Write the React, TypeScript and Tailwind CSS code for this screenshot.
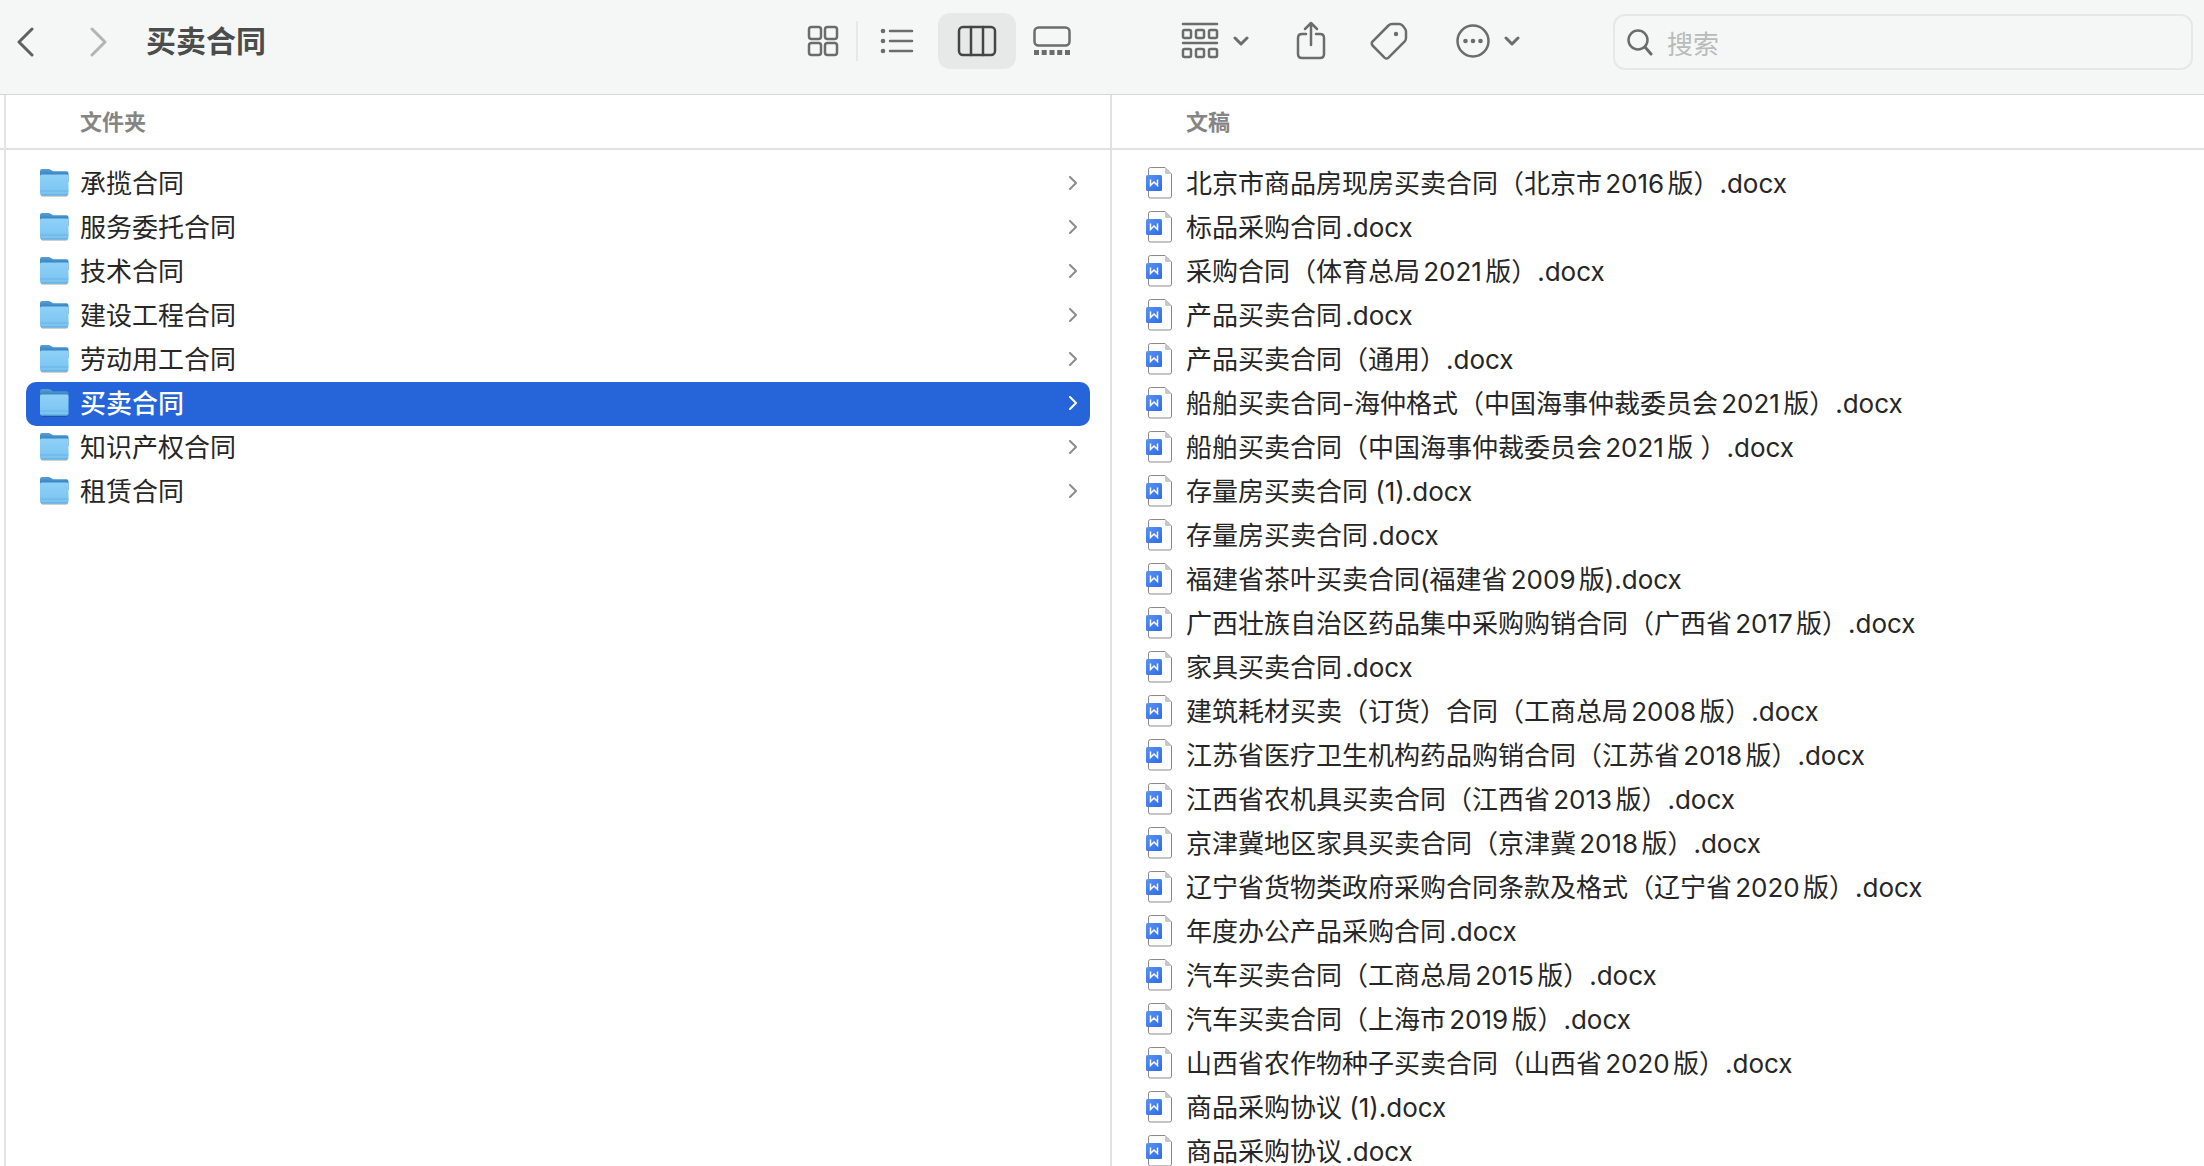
import type { ReactNode } from "react";

const folders = [
  "承揽合同",
  "服务委托合同",
  "技术合同",
  "建设工程合同",
  "劳动用工合同",
  "买卖合同",
  "知识产权合同",
  "租赁合同",
];

const documents = [
  "北京市商品房现房买卖合同（北京市2016版）.docx",
  "标品采购合同.docx",
  "采购合同（体育总局2021版）.docx",
  "产品买卖合同.docx",
  "产品买卖合同（通用）.docx",
  "船舶买卖合同-海仲格式（中国海事仲裁委员会2021版）.docx",
  "船舶买卖合同（中国海事仲裁委员会2021版 ）.docx",
  "存量房买卖合同 (1).docx",
  "存量房买卖合同.docx",
  "福建省茶叶买卖合同(福建省2009版).docx",
  "广西壮族自治区药品集中采购购销合同（广西省2017版）.docx",
  "家具买卖合同.docx",
  "建筑耗材买卖（订货）合同（工商总局2008版）.docx",
  "江苏省医疗卫生机构药品购销合同（江苏省2018版）.docx",
  "江西省农机具买卖合同（江西省2013版）.docx",
  "京津冀地区家具买卖合同（京津冀2018版）.docx",
  "辽宁省货物类政府采购合同条款及格式（辽宁省2020版）.docx",
  "年度办公产品采购合同.docx",
  "汽车买卖合同（工商总局2015版）.docx",
  "汽车买卖合同（上海市2019版）.docx",
  "山西省农作物种子买卖合同（山西省2020版）.docx",
  "商品采购协议 (1).docx",
  "商品采购协议.docx",
];

function Stroke({ w, h, sw = 2.5, children }: { w: number; h: number; sw?: number; children: ReactNode }) {
  return (
    <svg
      width={w}
      height={h}
      viewBox={`0 0 ${w} ${h}`}
      fill="none"
      stroke="currentColor"
      strokeWidth={sw}
      strokeLinecap="round"
      strokeLinejoin="round"
      className="shrink-0"
      aria-hidden="true"
    >
      {children}
    </svg>
  );
}

function SmallChevron() {
  return (
    <Stroke w={16} h={10} sw={3}>
      <path d="M2 2 L8 8 L14 2" />
    </Stroke>
  );
}

function FolderIcon() {
  return (
    <svg width="30" height="30" viewBox="0 0 30 30" className="shrink-0" aria-hidden="true">
      <defs>
        <linearGradient id="folder-back" x1="0" y1="0" x2="0" y2="1">
          <stop offset="0" stopColor="#559fd0" />
          <stop offset="0.5" stopColor="#3481c2" />
          <stop offset="1" stopColor="#3481c2" />
        </linearGradient>
        <linearGradient id="folder-front" x1="0" y1="0" x2="0" y2="1">
          <stop offset="0" stopColor="#8fd1f8" />
          <stop offset="1" stopColor="#78c3f0" />
        </linearGradient>
      </defs>
      <rect x="1" y="25" width="27" height="4" rx="2" fill="#000" opacity="0.18" />
      <path d="M0 3Q0 1 2 1H8Q10 1 11.500 2.200L13 3.300H26.500Q28.500 3.300 28.500 5.300V14H0Z" fill="url(#folder-back)" />
      <path d="M0 8Q0 6.500 1.500 6.500H27Q28.500 6.500 28.500 8V25.500Q28.500 27.500 26.500 27.500H2Q0 27.500 0 25.500Z" fill="url(#folder-front)" />
      <path d="M0 23H28.500" stroke="#69b4e4" strokeWidth="1" />
      <path d="M1 27H27.500" stroke="#5aa5d6" strokeWidth="1" />
    </svg>
  );
}

function WordIcon() {
  return (
    <svg width="27" height="32" viewBox="0 0 27 32" className="shrink-0" aria-hidden="true">
      <defs>
        <linearGradient id="word-badge" x1="0" y1="0" x2="1" y2="1">
          <stop offset="0" stopColor="#5b93f2" />
          <stop offset="1" stopColor="#2c6be6" />
        </linearGradient>
      </defs>
      <path d="M4.500 0.500H19L25.500 7V29Q25.500 31 23.500 31H4.500Q2.500 31 2.500 29V2.500Q2.500 0.500 4.500 0.500Z" fill="#fdfdfd" stroke="#8a8a8a" />
      <path d="M19 0.500L25.500 7H20.500Q19 7 19 5.500Z" fill="#c8c8c8" />
      <rect x="0" y="8" width="16" height="16" rx="1.500" fill="url(#word-badge)" />
      <path d="M4.500 12.500V18.500L8 15L11.500 18.500V12.500" fill="none" stroke="#fff" strokeWidth="1.500" />
    </svg>
  );
}

function ColumnHeader({ children }: { children: ReactNode }) {
  return (
    <h2 className="flex h-[55px] items-center border-b-2 border-[#e0e2e1] pt-0.5 pl-[74px] text-[22px] font-semibold text-[#858585]">
      {children}
    </h2>
  );
}

export default function App() {
  return (
    <div
      lang="zh-CN"
      className="flex h-screen flex-col overflow-hidden bg-white font-['Inter','Noto_Sans_CJK_SC',sans-serif] text-[26px] text-[#262626] [text-autospace:normal]"
    >
      <header className="flex h-[95px] shrink-0 items-start border-b border-[#d3d7d5] bg-[#f5f7f6] pt-3.5 pr-[11px] text-[#6b6d6c]">
        <div className="flex h-14 w-[794px] items-center pl-4">
          <button type="button" aria-label="后退" className="text-[#5f6160]">
            <Stroke w={18} h={30} sw={3}>
              <path d="M16 2L3 15L16 28" />
            </Stroke>
          </button>
          <button type="button" aria-label="前进" className="ml-14 text-[#b3b5b4]">
            <Stroke w={18} h={30} sw={3}>
              <path d="M2 2L15 15L2 28" />
            </Stroke>
          </button>
          <h1 className="ml-[38px] pb-0.5 text-[30px] font-bold text-[#4b4d4c]">买卖合同</h1>
        </div>

        <div role="group" aria-label="显示方式" className="flex h-14 items-center pb-0.5">
          <button type="button" aria-label="图标" className="flex h-14 w-[62px] items-center justify-center pr-1">
            <Stroke w={32} h={32}>
              <rect x="2" y="2" width="12" height="12" rx="2.500" />
              <rect x="18" y="2" width="12" height="12" rx="2.500" />
              <rect x="2" y="18" width="12" height="12" rx="2.500" />
              <rect x="18" y="18" width="12" height="12" rx="2.500" />
            </Stroke>
          </button>
          <span className="h-10 w-0.5 bg-[#e7e9e8]" />
          <button type="button" aria-label="列表" className="flex h-14 w-20 items-center justify-center pr-0.5">
            <Stroke w={34} h={26}>
              <path d="M10 3H32M10 13H32M10 23H32" />
              <g fill="currentColor" stroke="none">
                <circle cx="3" cy="3" r="2.300" />
                <circle cx="3" cy="13" r="2.300" />
                <circle cx="3" cy="23" r="2.300" />
              </g>
            </Stroke>
          </button>
          <button
            type="button"
            aria-label="分栏"
            aria-pressed="true"
            className="flex h-14 w-[78px] items-center justify-center rounded-xl bg-[#e7e9e8] text-[#444645]"
          >
            <Stroke w={40} h={32}>
              <rect x="2" y="2" width="36" height="28" rx="4" />
              <path d="M14 2V30M26 2V30" />
            </Stroke>
          </button>
          <button type="button" aria-label="画廊" className="flex h-14 w-[72px] items-center justify-center">
            <Stroke w={40} h={32}>
              <rect x="2.500" y="2.500" width="35" height="18" rx="4" />
              <path d="M2 25h5v5h-5zM9.700 25h5v5h-5zM17.500 25h5v5h-5zM25.200 25h5v5h-5zM33 25h5v5h-5z" fill="currentColor" stroke="none" />
            </Stroke>
          </button>
        </div>

        <div className="ml-[93px] flex h-14 items-center pb-0.5">
          <button type="button" aria-label="分组" className="flex h-14 items-center gap-3.5">
            <Stroke w={38} h={38}>
              <path d="M2 2H36M2 21H36" />
              <rect x="2" y="8" width="8" height="8" rx="1.500" />
              <rect x="15" y="8" width="8" height="8" rx="1.500" />
              <rect x="28" y="8" width="8" height="8" rx="1.500" />
              <rect x="2" y="27" width="8" height="8" rx="1.500" />
              <rect x="15" y="27" width="8" height="8" rx="1.500" />
              <rect x="28" y="27" width="8" height="8" rx="1.500" />
            </Stroke>
            <SmallChevron />
          </button>
          <button type="button" aria-label="共享" className="ml-[46px] flex h-14 items-center">
            <Stroke w={32} h={40}>
              <path d="M11 13H7Q3 13 3 17V33Q3 37 7 37H25Q29 37 29 33V17Q29 13 25 13H21" />
              <path d="M16 24V3M10 8L16 2L22 8" />
            </Stroke>
          </button>
          <button type="button" aria-label="标签" className="ml-[43px] flex h-14 items-center">
            <Stroke w={38} h={40}>
              <path d="M18.500 4.500Q20 3 22 3H29Q31 3 32.300 4.300L34.700 7.200Q36 8.700 36 10.500V17Q36 19 34.700 20.400L18.500 36.600Q16.500 38.500 14.500 36.600L2.500 24.500Q1 22.500 2.500 20.600Z" />
              <circle cx="26" cy="13" r="2.200" fill="currentColor" stroke="none" />
            </Stroke>
          </button>
          <button type="button" aria-label="更多" className="ml-12 flex h-14 items-center gap-3.5">
            <Stroke w={34} h={34}>
              <circle cx="17" cy="17" r="15.500" />
              <g fill="currentColor" stroke="none">
                <circle cx="9.500" cy="17" r="2.300" />
                <circle cx="17" cy="17" r="2.300" />
                <circle cx="24.500" cy="17" r="2.300" />
              </g>
            </Stroke>
            <SmallChevron />
          </button>
        </div>

        <label className="ml-[93px] flex h-14 flex-1 items-center gap-3.5 rounded-xl border-2 border-[#e6e8e7] pl-3">
          <Stroke w={26} h={28}>
            <circle cx="11" cy="12" r="9.500" />
            <path d="M18 19L24 26" strokeWidth="3" />
          </Stroke>
          <input
            type="text"
            aria-label="搜索"
            placeholder="搜索"
            className="min-w-0 flex-1 bg-transparent pt-1 text-[26px] outline-none placeholder:text-[#b9bbba]"
          />
        </label>
      </header>

      <main className="grid min-h-0 flex-1 grid-cols-[6px_1106fr_1092fr]">
        <div className="border-r-2 border-[#e4e4e4]">
          <div className="h-[55px] border-b-2 border-[#e0e2e1]" />
        </div>

        <section className="min-w-0 border-r-2 border-[#e0e0e0]">
          <ColumnHeader>文件夹</ColumnHeader>
          <ul className="px-5 pt-3">
            {folders.map((name) => {
              const selected = name === "买卖合同";
              return (
                <li key={name}>
                  <button
                    type="button"
                    aria-pressed={selected}
                    className={
                      selected
                        ? "flex h-11 w-full items-center gap-2.5 rounded-[10px] bg-[#2564d9] pr-3 pb-0.5 pl-3.5 text-left font-medium text-white"
                        : "flex h-11 w-full items-center gap-2.5 pr-3 pb-0.5 pl-3.5 text-left"
                    }
                  >
                    <FolderIcon />
                    <span className="flex-1 truncate">{name}</span>
                    <span className={selected ? "text-white" : "text-[#8c8c8c]"}>
                      <Stroke w={10} h={14} sw={2}>
                        <path d="M2 1L8 7L2 13" />
                      </Stroke>
                    </span>
                  </button>
                </li>
              );
            })}
          </ul>
        </section>

        <section className="min-w-0 overflow-hidden">
          <ColumnHeader>文稿</ColumnHeader>
          <ul className="px-5 pt-3">
            {documents.map((name) => (
              <li key={name}>
                <button type="button" className="flex h-11 w-full items-center gap-[13px] pb-0.5 pl-3.5 text-left">
                  <WordIcon />
                  <span className="flex-1 truncate">{name}</span>
                </button>
              </li>
            ))}
          </ul>
        </section>
      </main>
    </div>
  );
}
